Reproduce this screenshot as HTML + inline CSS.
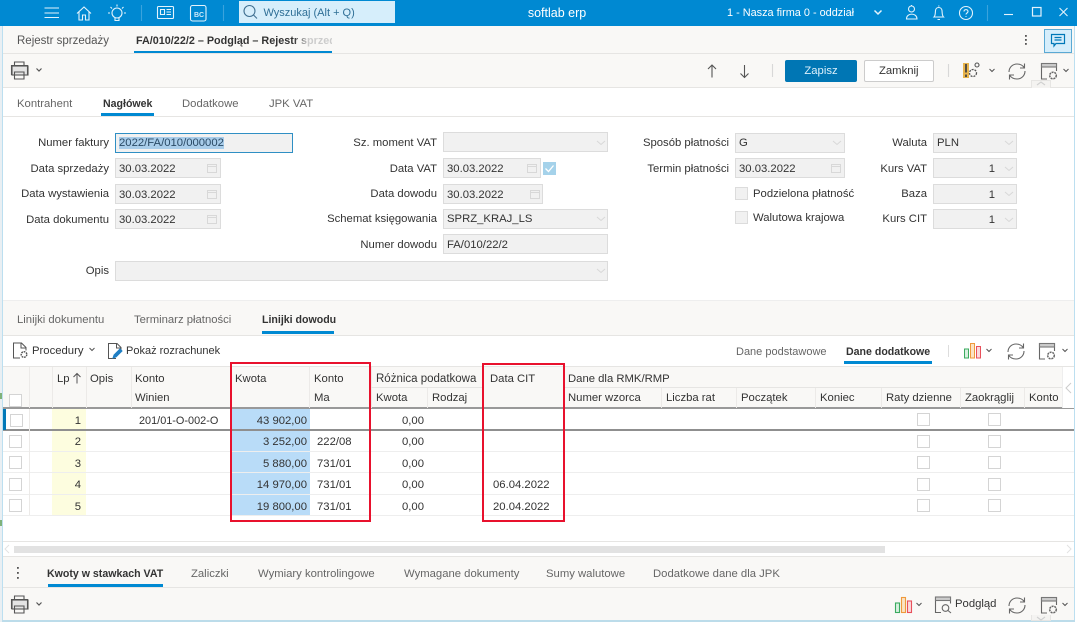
<!DOCTYPE html>
<html lang="pl"><head><meta charset="utf-8"><title>softlab erp</title>
<style>
html,body{margin:0;padding:0}
body{width:1077px;height:622px;overflow:hidden;position:relative;background:#fff;font-family:"Liberation Sans",sans-serif;font-size:11.3px;color:#333}
div{position:absolute;box-sizing:border-box}
.t{white-space:nowrap;line-height:14px;height:14px}
.r{text-align:right}
.g{color:#666}
.b{font-weight:bold;color:#333;font-size:10.6px}
.f{background:#f1f1f1;border:1px solid #dcdcdc;height:20px;padding-left:3px;line-height:19px;white-space:nowrap;color:#333}
.c{width:13px;height:13px;background:#fff;border:1px solid #d4d4d4}
.c2{width:13px;height:13px;background:#f1f1f1;border:1px solid #dcdcdc}
.hl{height:1px;background:#e6e5e3}
.vl{width:1px;background:#eceae8}
svg{position:absolute;overflow:visible;fill:none}
</style></head><body>

<!-- title bar -->
<div style="left:0;top:0;width:1077px;height:26px;background:#0089d2"></div>
<div style="left:239px;top:1px;width:156px;height:22px;background:#d6eefb"></div>
<div class="t" style="left:263.500px;top:6px;color:#2f6f96;font-size:11px">Wyszukaj (Alt + Q)</div>
<div class="t" style="left:507px;top:6px;color:#fff;width:100px;text-align:center;font-size:12.500px">softlab erp</div>
<div class="t" style="left:727px;top:6px;color:#fff;font-size:10.900px">1 - Nasza firma 0 - oddział</div>
<div style="left:194px;top:11.500px;color:#cfe9f8;font-size:7px;font-weight:bold;height:8px;line-height:8px">BC</div>
<svg style="left:0;top:0" width="1077" height="26" stroke="#e4f3fc" stroke-width="1.100">
<path d="M44.500 8h14.500M44.500 13h14.500M44.500 17.500h14.500"/>
<path d="M77 13.500l7-6.500 7 6.500M79 11.500v8.500h3.500v-5h3v5H89v-8.500"/>
<circle cx="117" cy="13" r="5"/><path d="M115 18v2.500h4V18M117 4.500V6.500M108 13h2M124 13h2M110.500 7l1.500 1.500M123.500 7L122 8.500"/>
<path d="M141.500 5v16M223.500 5v16M987.500 5v16" stroke="#3aa3dd"/>
<rect x="157.500" y="6.500" width="16" height="12" rx="1"/><path d="M160.500 9.500h4v5h-4zM166.500 9.500h4.500M166.500 12h4.500M166.500 14.500h4.500"/>
<rect x="190.500" y="5.500" width="15.500" height="15.500" rx="2"/>
<path d="M874.500 10.500l3.500 3.500 3.500-3.500" stroke-width="1.500"/>
<circle cx="911.500" cy="9" r="3"/><path d="M906.500 19c0-6.500 10.500-6.500 10.500 0zM911.500 5v1"/>
<path d="M934 17c1.500-1.500 1.200-3.500 1.500-6.500.400-4 6-4 6.500 0 .300 3 0 5 1.500 6.500zM937.500 19.500h2.500M938.800 5.500v1"/>
<circle cx="966" cy="13" r="6.500"/><path d="M964 11.500c0-2.500 4-2.500 4 0 0 1.500-2 1.500-2 3M966 16v.900"/>
<path d="M1004 14.500h9"/>
<rect x="1032.500" y="7.500" width="8.500" height="8.500" stroke-width="1.200"/>
<path d="M1059.500 8l8 8M1067.500 8l-8 8"/>
</svg>
<svg style="left:0;top:0" width="400" height="26" stroke="#3f6f90" stroke-width="1.100"><circle cx="249.500" cy="11" r="5.500"/><path d="M253.500 15l3.500 3.500"/></svg>

<!-- window edges -->
<div style="left:0;top:26px;width:3px;height:596px;background:#e9eff3;border-right:1px solid #bcdff0"></div>
<div style="left:0;top:393px;width:2px;height:6px;background:#7fb27a"></div>
<div style="left:0;top:520px;width:2px;height:6px;background:#7fb27a"></div>
<div style="left:1074px;top:26px;width:3px;height:596px;background:#fff;border-left:1px solid #bcdff0"></div>
<div style="left:2px;top:620px;width:1073px;height:2px;background:#bcdcea"></div>

<!-- tab bar -->
<div style="left:3px;top:26px;width:1071px;height:28px;background:#f9f8f6;border-bottom:1px solid #e6e5e3"></div>
<div class="t" style="left:17px;top:34px;color:#555;font-size:11.500px">Rejestr sprzedaży</div>
<div class="t b" style="left:136px;top:34px;width:196px;overflow:hidden;font-size:10.800px;background:linear-gradient(90deg,#333 0 158px,#ccc 172px);-webkit-background-clip:text;background-clip:text;color:transparent">FA/010/22/2 – Podgląd – Rejestr sprzedaży</div>
<div style="left:134px;top:50.500px;width:198px;height:2.500px;background:#0089d2"></div>
<svg style="left:1020px;top:32px" width="12" height="16"><rect x="5" y="3" width="1.800" height="1.800" fill="#555"/><rect x="5" y="7" width="1.800" height="1.800" fill="#555"/><rect x="5" y="11" width="1.800" height="1.800" fill="#555"/></svg>
<div style="left:1044px;top:29px;width:28px;height:23.500px;background:#d6eefb;border:1px solid #5aa9d4"></div>
<svg style="left:1044px;top:29px" width="27" height="24" stroke="#0078b8" stroke-width="1.200"><path d="M7.500 5.500h13v9h-8.500l-2 2.500v-2.500H7.500zM10.500 8.500h7M10.500 11h7"/></svg>

<!-- toolbar -->
<div style="left:3px;top:54px;width:1071px;height:34px;background:#f9f8f6;border-bottom:1px solid #e6e5e3"></div>
<div style="left:785px;top:60px;width:72px;height:22px;background:#0076b4;border-radius:2px;color:#dcf0fb;text-align:center;line-height:22px">Zapisz</div>
<div style="left:863.500px;top:60px;width:70.500px;height:22px;background:#fff;border:1px solid #ccc;border-radius:2px;text-align:center;line-height:20px">Zamknij</div>
<div style="left:1031px;top:80px;width:20px;height:8px;background:#f4f3f1;border:1px solid #e6e5e3;border-bottom:0"></div>
<svg style="left:0;top:-2px" width="1077" height="100" stroke="#555" stroke-width="1.100">
<rect x="12" y="68" width="16" height="9" fill="#e4e4e4"/>
<path d="M14.500 67.500V64h9.500v3.500M11.500 77v-9.500h16V77h-3.500M14.500 77.500V81h9.500v-7h-9.500z"/>
<path d="M36.500 70.500l2.500 2.500 2.500-2.500" stroke-width="1.200"/>
<path d="M712 79.500V67M708 71l4-4 4 4M744.500 67v12.500M740.500 75.500l4 4 4-4"/>
<path d="M772.500 66v13M948.500 66v13" stroke="#d8d8d8"/>
<path d="M989.500 71l2.500 2.500 2.500-2.500M1063.500 71l2.500 2.500 2.500-2.500" stroke-width="1"/>
<path d="M1037 87l4-3 4 3" stroke="#d0d0d0"/>
<g transform="translate(1008 65)" stroke="#666"><path d="M1 9C1 4 5 1 9 1c3 0 6 1.500 7.500 4M16.500.5V5H12M17 8c0 5-4 8-8 8-3 0-6-1.500-7.500-4M1.500 16.500V12H6"/></g>
<g transform="translate(1041 65)" stroke="#666"><path d="M6 16H.5V.5h15V8"/><rect x=".5" y=".5" width="15" height="3.500" fill="#ccc" stroke="#777"/><circle cx="12" cy="12.500" r="3.300" stroke-dasharray="2 .8" stroke-width="1.500"/></g>
<rect x="963" y="65" width="6" height="15" fill="#e8b44c" stroke="none"/><path d="M966 66v8.500M966 76.500v2.500" stroke="#444" stroke-width="1.800"/>
<circle cx="973" cy="75" r="3.500" stroke-width="1.300" stroke-dasharray="2 1"/><circle cx="977" cy="67" r="2"/>
</svg>

<!-- form tabs -->
<div class="hl" style="left:3px;top:116px;width:1071px"></div>
<div class="t g" style="left:17px;top:97px">Kontrahent</div>
<div class="t b" style="left:103px;top:97px">Nagłówek</div>
<div style="left:101px;top:113px;width:53px;height:3px;background:#0089d2"></div>
<div class="t g" style="left:182px;top:97px">Dodatkowe</div>
<div class="t g" style="left:269px;top:97px">JPK VAT</div>

<!-- form col 1 -->
<div class="t r" style="right:968px;top:136px">Numer faktury</div>
<div class="t r" style="right:968px;top:162px">Data sprzedaży</div>
<div class="t r" style="right:968px;top:187px">Data wystawienia</div>
<div class="t r" style="right:968px;top:213px">Data dokumentu</div>
<div class="t r" style="right:968px;top:264px">Opis</div>
<div class="f" style="left:115px;top:133px;width:178px;border-color:#2f8fc4"><span style="background:#a9cdea;color:#2a4a66">2022/FA/010/000002</span></div>
<div class="f" style="left:115px;top:158px;width:106px;line-height:20px">30.03.2022</div>
<div class="f" style="left:115px;top:184px;width:106px;line-height:20px">30.03.2022</div>
<div class="f" style="left:115px;top:209px;width:106px;line-height:21px">30.03.2022</div>
<div class="f" style="left:115px;top:261px;width:493px"></div>

<!-- form col 2 -->
<div class="t r" style="right:640px;top:136px">Sz. moment VAT</div>
<div class="t r" style="right:640px;top:162px">Data VAT</div>
<div class="t r" style="right:640px;top:187px">Data dowodu</div>
<div class="t r" style="right:640px;top:212px">Schemat księgowania</div>
<div class="t r" style="right:640px;top:238px">Numer dowodu</div>
<div class="f" style="left:443px;top:132px;width:165px"></div>
<div class="f" style="left:443px;top:158px;width:98px;line-height:20px">30.03.2022</div>
<div class="f" style="left:443px;top:184px;width:100px;line-height:20px">30.03.2022</div>
<div class="f" style="left:443px;top:209px;width:165px">SPRZ_KRAJ_LS</div>
<div class="f" style="left:443px;top:234px;width:165px;line-height:20px">FA/010/22/2</div>
<div style="left:543px;top:162px;width:13px;height:13px;background:#a5d2ea"></div>
<svg style="left:543px;top:162px" width="13" height="13" stroke="#fff" stroke-width="1.300"><path d="M2.500 6.500l3 3 5-6"/></svg>

<!-- form col 3 -->
<div class="t r" style="right:348px;top:136px">Sposób płatności</div>
<div class="t r" style="right:348px;top:162px">Termin płatności</div>
<div class="f" style="left:735px;top:133px;width:110px">G</div>
<div class="f" style="left:735px;top:158px;width:110px;line-height:20px">30.03.2022</div>
<div class="c2" style="left:735px;top:187px"></div>
<div class="c2" style="left:735px;top:211px"></div>
<div class="t" style="left:753px;top:187px">Podzielona płatność</div>
<div class="t" style="left:753px;top:211px">Walutowa krajowa</div>

<!-- form col 4 -->
<div class="t r" style="right:150px;top:136px">Waluta</div>
<div class="t r" style="right:150px;top:162px">Kurs VAT</div>
<div class="t r" style="right:150px;top:187px">Baza</div>
<div class="t r" style="right:150px;top:212px">Kurs CIT</div>
<div class="f" style="left:933px;top:133px;width:84px">PLN</div>
<div class="f r" style="left:933px;top:158px;width:84px;padding-right:21px;line-height:20px">1</div>
<div class="f r" style="left:933px;top:184px;width:84px;padding-right:21px;line-height:20px">1</div>
<div class="f r" style="left:933px;top:209px;width:84px;padding-right:21px;line-height:20px">1</div>

<!-- field icons -->
<svg style="left:0;top:0" width="1077" height="300" stroke="#d8d8d8" stroke-width="1">
<path d="M207.500 164.500h9v8h-9zM207.500 166.500h9M207.500 190.500h9v8h-9zM207.500 192.500h9M207.500 215.500h9v8h-9zM207.500 217.500h9"/>
<path d="M527.500 164.500h9v8h-9zM527.500 166.500h9M530.500 190.500h9v8h-9zM530.500 192.500h9M831.500 164.500h9v8h-9zM831.500 166.500h9"/>
<path d="M597 141l4 3.500 4-3.500M597 217l4 3.500 4-3.500M597 269l4 3.500 4-3.500M833 141l4 3.500 4-3.500M1005 141l4 3.500 4-3.500M1005 167l4 3.500 4-3.500M1005 192l4 3.500 4-3.500M1005 218l4 3.500 4-3.500"/>
</svg>

<!-- lines tabs -->
<div style="left:3px;top:300px;width:1071px;height:36px;background:#f9f8f6;border-top:1px solid #eee;border-bottom:1px solid #e6e5e3"></div>
<div class="t g" style="left:17px;top:313px">Linijki dokumentu</div>
<div class="t g" style="left:134px;top:313px">Terminarz płatności</div>
<div class="t b" style="left:262px;top:313px">Linijki dowodu</div>
<div style="left:262px;top:331px;width:72px;height:3px;background:#0089d2"></div>

<!-- table toolbar -->
<div style="left:3px;top:336px;width:1071px;height:31px;background:#fff;border-bottom:1px solid #e6e5e3"></div>
<div class="t" style="left:32px;top:344px">Procedury</div>
<div class="t" style="left:126px;top:344px;font-size:11px">Pokaż rozrachunek</div>
<div class="t g" style="left:736px;top:345px;font-size:11px">Dane podstawowe</div>
<div class="t b" style="left:846px;top:345px">Dane dodatkowe</div>
<div style="left:844px;top:361px;width:88px;height:3px;background:#0089d2"></div>
<svg style="left:0;top:0" width="1077" height="367" stroke="#555" stroke-width="1">
<path d="M20 358h-6.500v-15h8l4.500 4.500v3M21 343v5h5"/><circle cx="24" cy="354.500" r="2.800" stroke-width="1.400" stroke-dasharray="1.700 .8"/>
<path d="M89.500 348l2.500 2.500 2.500-2.500"/>
<path d="M116 358.500h-7.500v-15h8.500l4 4v3M116.500 343.500v4.500h4.500"/>
<path d="M113 358l1-3 6-6 2 2-6 6z" fill="#1f7fc4" stroke="#1f7fc4"/>
<path d="M948.500 345v12" stroke="#ddd"/>
<rect x="964.500" y="349" width="4" height="9" stroke="#3bab5f" fill="#d8f0e0"/><rect x="970.500" y="343.500" width="4" height="14.500" stroke="#ef9a3c" fill="#fbe3c5"/><rect x="976.500" y="346.500" width="4" height="11.500" stroke="#e8505b" fill="#fbdadd"/>
<path d="M986.500 349l2.500 2.500 2.500-2.500M1062.500 349l2.500 2.500 2.500-2.500"/>
<g transform="translate(1007 343)" stroke="#666" stroke-width="1.100"><path d="M1 9C1 4 5 1 9 1c3 0 6 1.500 7.500 4M16.500.5V5H12M17 8c0 5-4 8-8 8-3 0-6-1.500-7.500-4M1.500 16.500V12H6"/></g>
<g transform="translate(1039 343)" stroke="#666" stroke-width="1.100"><path d="M6 16H.5V.5h15V8"/><rect x=".5" y=".5" width="15" height="3.500" fill="#ccc" stroke="#777"/><circle cx="12" cy="12.500" r="3.300" stroke-dasharray="2 .8" stroke-width="1.500"/></g>
</svg>

<!-- table header -->
<div style="left:3px;top:367px;width:1071px;height:42px;background:#f9f8f6;border-bottom:2px solid #999"></div>
<div class="vl" style="left:29px;top:367px;height:41px"></div>
<div class="vl" style="left:52px;top:367px;height:41px"></div>
<div class="vl" style="left:86px;top:367px;height:41px"></div>
<div class="vl" style="left:131px;top:367px;height:41px"></div>
<div class="vl" style="left:230px;top:367px;height:41px"></div>
<div class="vl" style="left:309px;top:367px;height:41px"></div>
<div class="vl" style="left:371px;top:367px;height:41px"></div>
<div class="vl" style="left:427px;top:388px;height:20px"></div>
<div class="vl" style="left:482px;top:367px;height:41px"></div>
<div class="vl" style="left:563px;top:367px;height:41px"></div>
<div class="vl" style="left:661px;top:388px;height:20px"></div>
<div class="vl" style="left:736px;top:388px;height:20px"></div>
<div class="vl" style="left:815px;top:388px;height:20px"></div>
<div class="vl" style="left:881px;top:388px;height:20px"></div>
<div class="vl" style="left:960px;top:388px;height:20px"></div>
<div class="vl" style="left:1024px;top:388px;height:20px"></div>
<div class="hl" style="left:371px;top:387px;width:111px"></div>
<div class="hl" style="left:563px;top:387px;width:499px"></div>
<div style="left:1062px;top:367px;width:12px;height:41px;background:#fff;border-left:1px solid #eee"></div>
<svg style="left:1064px;top:381px" width="10" height="14" stroke="#ccc"><path d="M7 2L2 7l5 5"/></svg>
<div class="c" style="left:9px;top:394px"></div>
<div class="t" style="left:57px;top:372px">Lp</div>
<svg style="left:70px;top:371px" width="14" height="14" stroke="#555"><path d="M7 2.500v10M3.500 6L7 2.500 10.500 6"/></svg>
<div class="t" style="left:90px;top:372px">Opis</div>
<div class="t" style="left:135px;top:372px">Konto</div>
<div class="t" style="left:135px;top:391px">Winien</div>
<div class="t" style="left:235px;top:372px">Kwota</div>
<div class="t" style="left:314px;top:372px">Konto</div>
<div class="t" style="left:314px;top:391px">Ma</div>
<div class="t" style="left:376px;top:372px;font-size:11.500px">Różnica podatkowa</div>
<div class="t" style="left:376px;top:391px">Kwota</div>
<div class="t" style="left:432px;top:391px">Rodzaj</div>
<div class="t" style="left:490px;top:372px">Data CIT</div>
<div class="t" style="left:568px;top:372px">Dane dla RMK/RMP</div>
<div class="t" style="left:568px;top:391px">Numer wzorca</div>
<div class="t" style="left:666px;top:391px">Liczba rat</div>
<div class="t" style="left:741px;top:391px">Początek</div>
<div class="t" style="left:820px;top:391px">Koniec</div>
<div class="t" style="left:886px;top:391px">Raty dzienne</div>
<div class="t" style="left:965px;top:391px">Zaokrąglij</div>
<div class="t" style="left:1029px;top:391px">Konto</div>

<!-- rows -->
<div style="left:52px;top:409px;width:34px;height:106px;background:#fdfddf"></div>
<div style="left:232px;top:409px;width:78px;height:106px;background:#b9dcf8"></div>
<div class="hl" style="left:3px;top:451px;width:1071px;background:#eee"></div>
<div class="hl" style="left:3px;top:472px;width:1071px;background:#eee"></div>
<div class="hl" style="left:3px;top:494px;width:1071px;background:#eee"></div>
<div class="hl" style="left:3px;top:515px;width:1071px;background:#eee"></div>
<div style="left:3px;top:429px;width:1071px;height:1.500px;background:#8f8f8f"></div>
<div style="left:3px;top:409px;width:3px;height:21px;background:#0078b8"></div>
<div class="vl" style="left:29px;top:409px;height:106px"></div>
<div class="c" style="left:10px;top:414px"></div>
<div class="c" style="left:9px;top:435px"></div>
<div class="c" style="left:9px;top:456px"></div>
<div class="c" style="left:9px;top:478px"></div>
<div class="c" style="left:9px;top:499px"></div>

<div class="t r" style="right:996px;top:414px">1</div>
<div class="t r" style="right:996px;top:435px">2</div>
<div class="t r" style="right:996px;top:457px">3</div>
<div class="t r" style="right:996px;top:478px">4</div>
<div class="t r" style="right:996px;top:500px">5</div>
<div class="t" style="left:139px;top:414px;font-size:10.900px">201/01-O-002-O</div>
<div class="t r" style="right:770px;top:414px">43 902,00</div>
<div class="t r" style="right:770px;top:435px">3 252,00</div>
<div class="t r" style="right:770px;top:457px">5 880,00</div>
<div class="t r" style="right:770px;top:478px">14 970,00</div>
<div class="t r" style="right:770px;top:500px">19 800,00</div>
<div class="t" style="left:317px;top:435px">222/08</div>
<div class="t" style="left:317px;top:457px">731/01</div>
<div class="t" style="left:317px;top:478px">731/01</div>
<div class="t" style="left:317px;top:500px">731/01</div>
<div class="t r" style="right:653px;top:414px">0,00</div>
<div class="t r" style="right:653px;top:435px">0,00</div>
<div class="t r" style="right:653px;top:457px">0,00</div>
<div class="t r" style="right:653px;top:478px">0,00</div>
<div class="t r" style="right:653px;top:500px">0,00</div>
<div class="t" style="left:493px;top:478px">06.04.2022</div>
<div class="t" style="left:493px;top:500px">20.04.2022</div>
<div class="c" style="left:917px;top:413px"></div><div class="c" style="left:988px;top:413px"></div>
<div class="c" style="left:917px;top:435px"></div><div class="c" style="left:988px;top:435px"></div>
<div class="c" style="left:917px;top:456px"></div><div class="c" style="left:988px;top:456px"></div>
<div class="c" style="left:917px;top:478px"></div><div class="c" style="left:988px;top:478px"></div>
<div class="c" style="left:917px;top:499px"></div><div class="c" style="left:988px;top:499px"></div>

<!-- red boxes -->
<div style="left:230px;top:362px;width:141px;height:160px;border:2px solid #e8112d"></div>
<div style="left:482px;top:363px;width:83px;height:159px;border:2px solid #e8112d"></div>

<!-- scrollbar -->
<div class="hl" style="left:3px;top:541px;width:1071px"></div>
<div style="left:14px;top:546px;width:871px;height:7px;background:#e2e2e2"></div>
<svg style="left:0;top:542px" width="1077" height="14" stroke="#e2e2e2"><path d="M9 3L5 7l4 4M1067 3l4 4-4 4"/></svg>

<!-- bottom tabs -->
<div style="left:3px;top:556px;width:1071px;height:32px;background:#f9f8f6;border-top:1px solid #e6e5e3;border-bottom:1px solid #e6e5e3"></div>
<svg style="left:13px;top:566px" width="10" height="14"><rect x="4" y="1" width="1.800" height="1.800" fill="#555"/><rect x="4" y="6" width="1.800" height="1.800" fill="#555"/><rect x="4" y="11" width="1.800" height="1.800" fill="#555"/></svg>
<div class="t b" style="left:47px;top:567px">Kwoty w stawkach VAT</div>
<div style="left:48px;top:584px;width:115px;height:3px;background:#0089d2"></div>
<div class="t g" style="left:191px;top:567px">Zaliczki</div>
<div class="t g" style="left:258px;top:567px">Wymiary kontrolingowe</div>
<div class="t g" style="left:404px;top:567px">Wymagane dokumenty</div>
<div class="t g" style="left:546px;top:567px">Sumy walutowe</div>
<div class="t g" style="left:653px;top:567px">Dodatkowe dane dla JPK</div>

<!-- bottom toolbar -->
<div style="left:3px;top:588px;width:1071px;height:32px;background:#f9f8f6"></div>
<div class="t" style="left:955px;top:597px">Podgląd</div>
<div style="left:1031px;top:615px;width:20px;height:6px;background:#f4f3f1;border:1px solid #e6e5e3;border-top:0"></div>
<svg style="left:0;top:0" width="1077" height="622" stroke="#555" stroke-width="1.100">
<rect x="12" y="600" width="16" height="9" fill="#e4e4e4"/>
<path d="M14.500 599.500V596h9.500v3.500M11.500 609v-9.500h16V609h-3.500M14.500 609.500v3.500h9.500v-7h-9.500z"/>
<path d="M36.500 602.500l2.500 2.500 2.500-2.500" stroke-width="1.200"/>
<rect x="895.500" y="603" width="4" height="9.500" stroke="#3bab5f" fill="#d8f0e0"/><rect x="901.500" y="597.500" width="4" height="15" stroke="#ef9a3c" fill="#fbe3c5"/><rect x="907.500" y="601" width="4" height="11.500" stroke="#e8505b" fill="#fbdadd"/>
<path d="M916.500 603l2.500 2.500 2.500-2.500M1062.500 603l2.500 2.500 2.500-2.500" stroke-width="1"/>
<path d="M941 612.500h-5.500V597h15v6.500" stroke="#666"/><rect x="935.500" y="597" width="15" height="3.500" fill="#ccc" stroke="#777"/><circle cx="945.500" cy="608" r="3.300" stroke="#666"/><path d="M948 610.500l3 2.500" stroke="#666"/>
<g transform="translate(1008 597)" stroke="#666"><path d="M1 9C1 4 5 1 9 1c3 0 6 1.500 7.500 4M16.500.5V5H12M17 8c0 5-4 8-8 8-3 0-6-1.500-7.500-4M1.500 16.500V12H6"/></g>
<g transform="translate(1041 597)" stroke="#666"><path d="M6 16H.5V.5h15V8"/><rect x=".5" y=".5" width="15" height="3.500" fill="#ccc" stroke="#777"/><circle cx="12" cy="12.500" r="3.300" stroke-dasharray="2 .8" stroke-width="1.500"/></g>
<path d="M1037 617l4 3 4-3" stroke="#d0d0d0"/>
</svg>
</body></html>
